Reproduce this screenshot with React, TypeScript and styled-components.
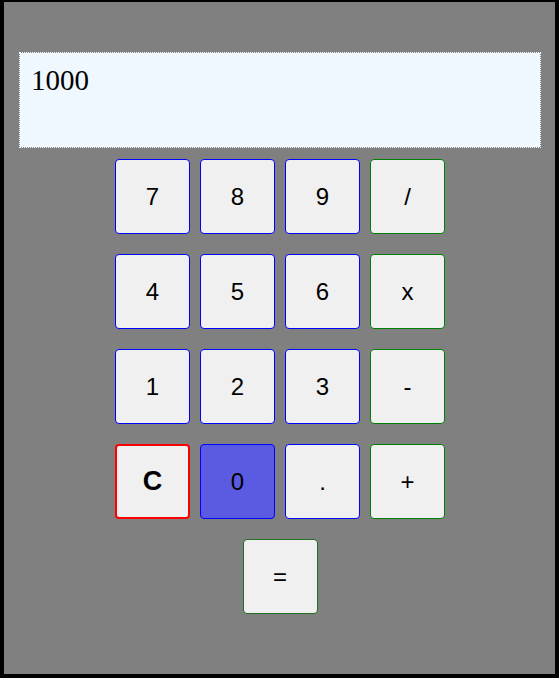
import React, { FC } from 'react';
import styled, { createGlobalStyle } from 'styled-components';

const GlobalStyle = createGlobalStyle`
    html, body {
        margin: 0;
        padding: 0;
        background: #000;
    }
    #root {
        width: 559px;
        height: 678px;
    }
`;

const Frame = styled.div`
    box-sizing: border-box;
    width: 559px;
    height: 678px;
    border-style: solid;
    border-color: #000;
    border-width: 2px 4px 4px 4px;
    background: #808080;
    padding: 50px 14px 0 15px;
    display: flex;
    flex-direction: column;
    align-items: center;
`;

const Display = styled.div`
    box-sizing: border-box;
    align-self: stretch;
    height: 96px;
    border: 1px dotted #ffffff;
    background: #f0f8ff;
    background-clip: padding-box;
    padding: 11px 11px;
    font-family: 'Liberation Serif', serif;
    font-size: 29px;
    line-height: 32px;
    color: #000;
`;

const Pad = styled.div`
    display: grid;
    grid-template-columns: repeat(4, 75px);
    grid-auto-rows: 75px;
    column-gap: 10px;
    row-gap: 20px;
    margin-top: 11px;
`;

type Kind = 'digit' | 'op' | 'clear' | 'zero' | 'equals';

const borderFor: Record<Kind, string> = {
    digit: '#0000ff',
    op: '#008000',
    clear: '#ff0000',
    zero: '#0000ff',
    equals: '#1f6f1f',
};

const Key = styled.button<{ $kind: Kind }>`
    box-sizing: border-box;
    width: 75px;
    height: 75px;
    padding: 0;
    border: ${(p) => (p.$kind === 'clear' ? 2 : 1)}px solid ${(p) => borderFor[p.$kind]};
    border-radius: 4px;
    background: ${(p) => (p.$kind === 'zero' ? '#5a5be0' : '#f0f0f0')};
    color: #000;
    font-family: 'Liberation Sans', Arial, sans-serif;
    font-size: ${(p) => (p.$kind === 'clear' ? 27 : 24)}px;
    font-weight: ${(p) => (p.$kind === 'clear' ? 700 : 400)};
    display: flex;
    align-items: center;
    justify-content: center;
    cursor: pointer;
`;

const EqualsRow = styled.div`
    margin-top: 20px;
    display: flex;
    justify-content: center;
`;

const keys: { label: string; kind: Kind }[] = [
    { label: '7', kind: 'digit' },
    { label: '8', kind: 'digit' },
    { label: '9', kind: 'digit' },
    { label: '/', kind: 'op' },
    { label: '4', kind: 'digit' },
    { label: '5', kind: 'digit' },
    { label: '6', kind: 'digit' },
    { label: 'x', kind: 'op' },
    { label: '1', kind: 'digit' },
    { label: '2', kind: 'digit' },
    { label: '3', kind: 'digit' },
    { label: '-', kind: 'op' },
    { label: 'C', kind: 'clear' },
    { label: '0', kind: 'zero' },
    { label: '.', kind: 'digit' },
    { label: '+', kind: 'op' },
];

const App: FC = () => {
    return (
        <>
            <GlobalStyle />
            <Frame>
                <Display>1000</Display>
                <Pad>
                    {keys.map((k) => (
                        <Key key={k.label} $kind={k.kind}>
                            {k.label}
                        </Key>
                    ))}
                </Pad>
                <EqualsRow>
                    <Key $kind="equals">=</Key>
                </EqualsRow>
            </Frame>
        </>
    );
};

export default App;
